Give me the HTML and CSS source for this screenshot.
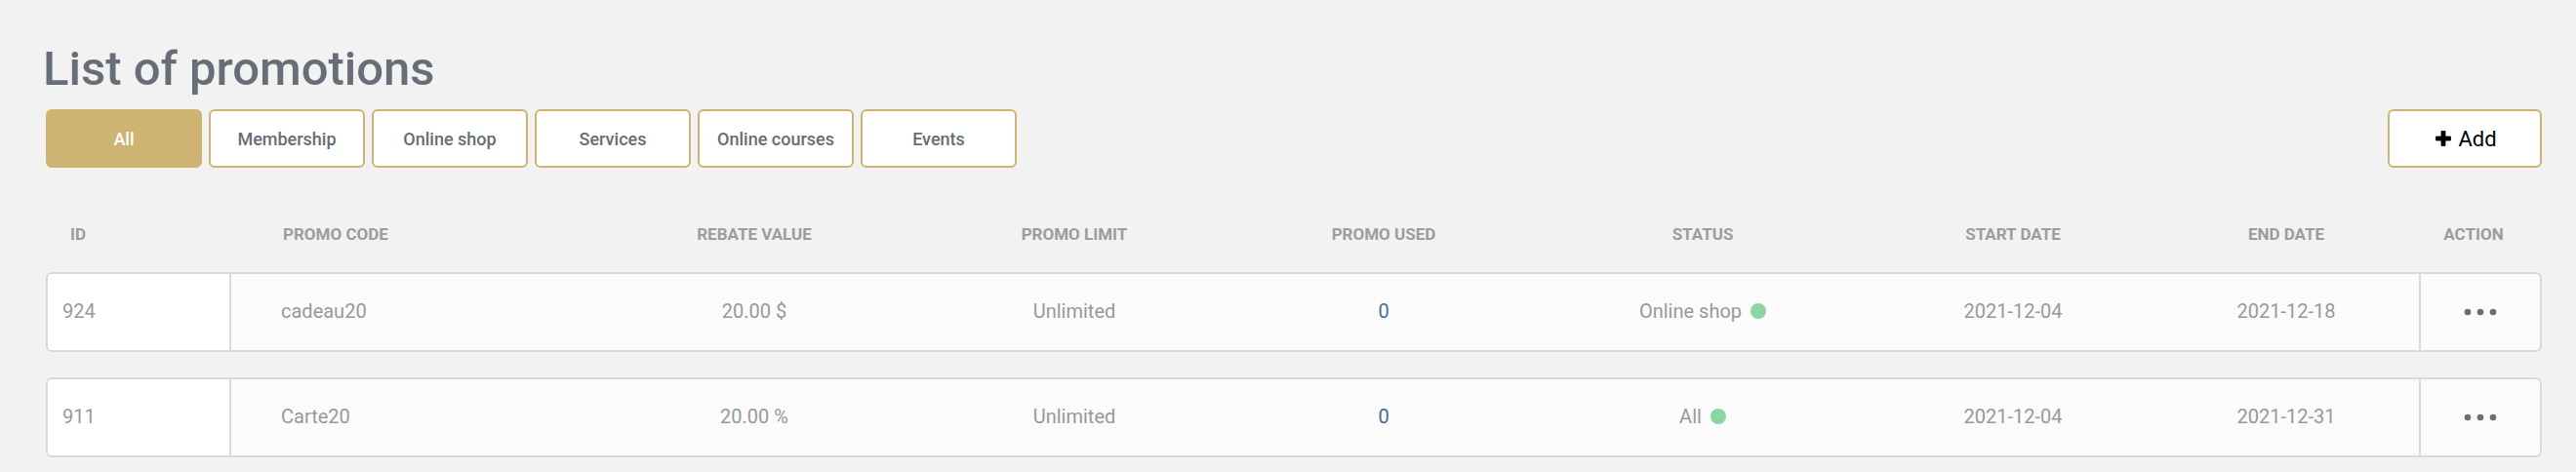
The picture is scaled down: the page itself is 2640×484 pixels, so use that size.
FILE: index.html
```html
<!DOCTYPE html>
<html lang="en">
<head>
<meta charset="utf-8">
<title>List of promotions</title>
<link rel="stylesheet" href="styles.css">
</head>
<body>
<main class="page">
  <h1 class="title">List of promotions</h1>
  <div class="toolbar">
    <div class="filters">
      <button class="filter active">All</button>
      <button class="filter">Membership</button>
      <button class="filter">Online shop</button>
      <button class="filter">Services</button>
      <button class="filter">Online courses</button>
      <button class="filter">Events</button>
    </div>
    <button class="add-btn">
      <svg class="plus" viewBox="0 0 18 18" width="18" height="18" aria-hidden="true"><path d="M7 1.5h4v5.5h5.5v4H11v5.5H7V11H1.5V7H7z" fill="#000" stroke="#000" stroke-width="0.8" stroke-linejoin="round"/></svg>
      <span>Add</span>
    </button>
  </div>

  <div class="table">
    <div class="thead">
      <div class="th th-id">ID</div>
      <div class="th th-left">PROMO CODE</div>
      <div class="th">REBATE VALUE</div>
      <div class="th">PROMO LIMIT</div>
      <div class="th">PROMO USED</div>
      <div class="th">STATUS</div>
      <div class="th">START DATE</div>
      <div class="th">END DATE</div>
      <div class="th th-action">ACTION</div>
    </div>

    <div class="row">
      <div class="td td-id">924</div>
      <div class="td td-left">cadeau20</div>
      <div class="td">20.00 $</div>
      <div class="td">Unlimited</div>
      <div class="td used">0</div>
      <div class="td"><span class="status">Online shop<i class="dot"></i></span></div>
      <div class="td">2021-12-04</div>
      <div class="td">2021-12-18</div>
      <div class="td td-action"><svg class="more" viewBox="0 0 34 8" width="34" height="8" aria-hidden="true"><circle cx="4" cy="4" r="3.3" fill="#6b6f75"/><circle cx="17" cy="4" r="3.3" fill="#6b6f75"/><circle cx="30" cy="4" r="3.3" fill="#6b6f75"/></svg></div>
    </div>

    <div class="row">
      <div class="td td-id">911</div>
      <div class="td td-left">Carte20</div>
      <div class="td">20.00 %</div>
      <div class="td">Unlimited</div>
      <div class="td used">0</div>
      <div class="td"><span class="status">All<i class="dot"></i></span></div>
      <div class="td">2021-12-04</div>
      <div class="td">2021-12-31</div>
      <div class="td td-action"><svg class="more" viewBox="0 0 34 8" width="34" height="8" aria-hidden="true"><circle cx="4" cy="4" r="3.3" fill="#6b6f75"/><circle cx="17" cy="4" r="3.3" fill="#6b6f75"/><circle cx="30" cy="4" r="3.3" fill="#6b6f75"/></svg></div>
    </div>
  </div>
</main>
</body>
</html>
```

FILE: styles.css
```css
* { box-sizing: border-box; }

html, body {
  margin: 0;
  padding: 0;
  background: #f2f2f2;
}

body {
  font-family: Roboto, "Liberation Sans", Arial, sans-serif;
  color: #999;
}

.page {
  padding: 43px 35px 0 47px;
}

.title {
  margin: 0 0 0 -3px;
  font-size: 49px;
  line-height: 56px;
  font-weight: 500;
  color: #686e77;
}

.toolbar {
  display: flex;
  justify-content: space-between;
  align-items: center;
  margin-top: 13px;
}

.filters {
  display: flex;
  gap: 7px;
}

.filter {
  width: 160px;
  height: 60px;
  border: 2px solid #cdb473;
  border-radius: 6px;
  background: #fff;
  font-family: Roboto, "Liberation Sans", Arial, sans-serif;
  font-size: 18px;
  font-weight: 500;
  color: #676d75;
  padding: 0;
}

.filter.active {
  background: #cdb473;
  color: #fff;
}

.add-btn {
  width: 158px;
  height: 60px;
  border: 2px solid #cdb473;
  border-radius: 6px;
  background: #fff;
  display: flex;
  align-items: center;
  justify-content: center;
  gap: 6px;
  font-family: Roboto, "Liberation Sans", Arial, sans-serif;
  font-size: 22px;
  font-weight: 400;
  color: #000;
  padding: 0 0 0 2px;
}

.plus { display: block; }

.table {
  margin-top: 48px;
}

.thead,
.row {
  display: grid;
  grid-template-columns: 188px 372px 328px 328px 306px 348px 288px 272px 124px;
  align-items: center;
}

.thead {
  height: 40px;
  padding: 0 2px;
  margin-bottom: 19px;
}

.th {
  font-size: 17px;
  font-weight: 700;
  color: #9c9c9c;
  text-align: center;
  white-space: nowrap;
}

.th-id { text-align: left; padding-left: 23px; }
.th-left { text-align: left; padding-left: 53px; }
.th-action { padding-right: 12px; }

.row {
  height: 82px;
  border: 2px solid #d9d9d9;
  border-radius: 6px;
  background: #fbfbfb;
  margin-bottom: 26px;
  overflow: hidden;
}

.td {
  height: 100%;
  display: flex;
  align-items: center;
  justify-content: center;
  padding-bottom: 3px;
  font-size: 20px;
  color: #999;
  white-space: nowrap;
}

.td-id {
  justify-content: flex-start;
  padding-left: 15px;
  background: #fff;
  border-right: 2px solid #d9d9d9;
}

.td-left {
  justify-content: flex-start;
  padding-left: 51px;
}

.td-action {
  border-left: 2px solid #d9d9d9;
  padding-bottom: 0;
}

.used { color: #4a6b99; }

.status {
  display: inline-flex;
  align-items: center;
  gap: 9px;
}

.dot {
  display: inline-block;
  width: 16px;
  height: 16px;
  border-radius: 50%;
  background: #8dd5a3;
}

.more { display: block; }
```
